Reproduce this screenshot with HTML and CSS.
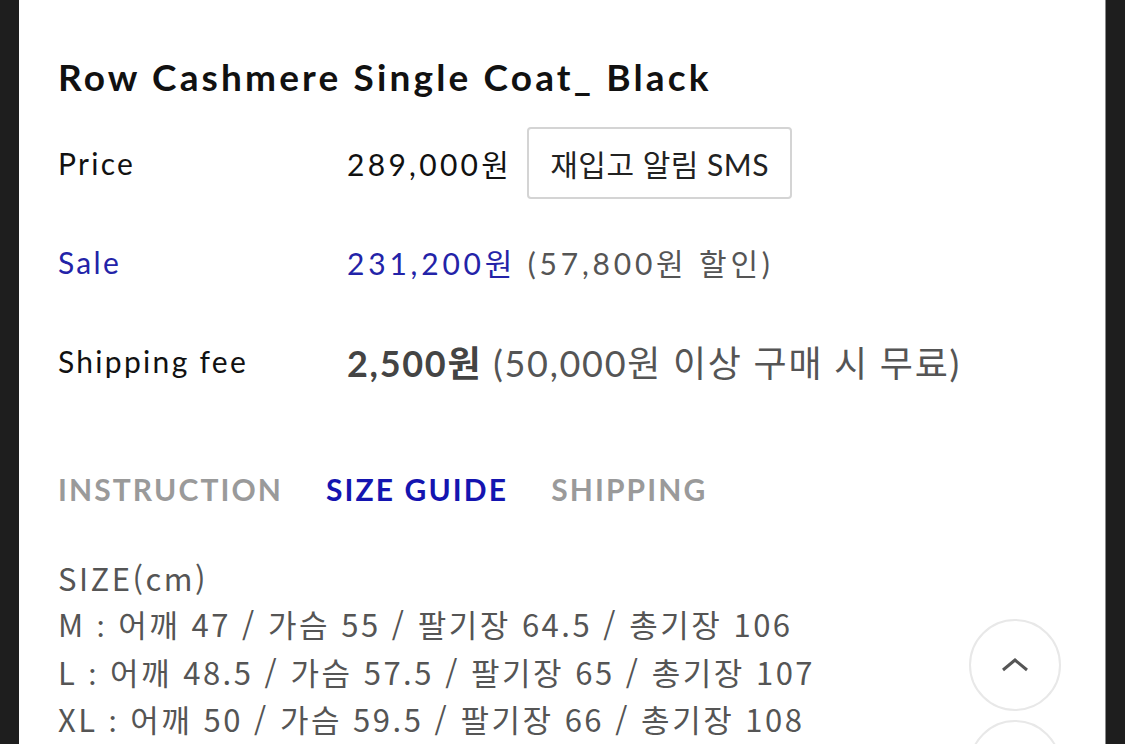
FILE: index.html
```html
<!DOCTYPE html>
<html lang="ko">
<head>
<meta charset="utf-8">
<link rel="stylesheet" href="styles.css">
</head>
<body>
<div class="frame">
  <main class="page">
    <h1 class="title">Row Cashmere Single Coat_ Black</h1>
    <div class="info">
      <div class="label">Price</div>
      <div class="value price"><span>289,000원</span><button class="restock">재입고 알림 SMS</button></div>
      <div class="label sale">Sale</div>
      <div class="value sale-value"><span class="sale">231,200원</span> <span class="muted">(57,800원 할인)</span></div>
      <div class="label">Shipping fee</div>
      <div class="value ship"><b>2,500원</b> <span>(50,000원 이상 구매 시 무료)</span></div>
    </div>
    <nav class="tabs">
      <span class="tab">INSTRUCTION</span>
      <span class="tab active">SIZE GUIDE</span>
      <span class="tab">SHIPPING</span>
    </nav>
    <div class="sizes">
      <p>SIZE(cm)</p>
      <p>M <span class="colon">:</span> 어깨 47 / 가슴 55 / 팔기장 64.5 / 총기장 106</p>
      <p>L <span class="colon">:</span> 어깨 48.5 / 가슴 57.5 / 팔기장 65 / 총기장 107</p>
      <p>XL <span class="colon">:</span> 어깨 50 / 가슴 59.5 / 팔기장 66 / 총기장 108</p>
    </div>
    <button class="float up" aria-label="top">
      <svg width="28" height="16" viewBox="0 0 28 16"><path d="M2 13 L14 3 L26 13" fill="none" stroke="#555" stroke-width="3"/></svg>
    </button>
    <button class="float down" aria-label="bottom"></button>
  </main>
</div>
</body>
</html>
```
FILE: styles.css
```css
html, body {
  margin: 0;
  padding: 0;
  background: #1e1e1e;
  height: 744px;
  overflow: hidden;
}
.frame {
  display: flex;
  height: 744px;
  padding: 0 19px 0 19px;
}
.page {
  position: relative;
  flex: 1;
  background: #fff;
  border-right: 1px solid #8a8a8a;
  padding: 0 0 0 39px;
  overflow: hidden;
  font-family: Lato, "Noto Sans CJK KR", sans-serif;
  color: #111;
}
.title {
  margin: 54px 0 0;
  font-size: 37px;
  font-weight: 700;
  letter-spacing: 3.15px;
  line-height: 46px;
}
.info {
  display: grid;
  grid-template-columns: 289px 1fr;
  grid-auto-rows: 99px;
  align-items: center;
  margin-top: 13px;
}
.label {
  font-size: 30px;
  letter-spacing: 2.3px;
}
.value {
  font-size: 30px;
  letter-spacing: 3.3px;
}
.price {
  display: flex;
  align-items: center;
  gap: 15px;
}
.restock {
  height: 72px;
  padding: 0 21px;
  border: 2px solid #d4d4d4;
  border-radius: 4px;
  background: #fff;
  font-family: Lato, "Noto Sans CJK KR", sans-serif;
  font-size: 30px;
  color: #222;
  letter-spacing: 0.5px;
}
.sale-value { letter-spacing: 3.8px; }
.sale { color: #2323a8; }
.muted { color: #555; }
.ship { color: #555; font-size: 36px; letter-spacing: 1.7px; }
.ship b { color: #444; font-weight: 700; }
.tabs {
  display: flex;
  gap: 43px;
  margin-top: 61px;
  font-size: 30px;
  font-weight: 700;
  letter-spacing: 2.1px;
  color: #9a9a9a;
}
.tab.active { color: #1414b0; }
.sizes {
  margin-top: 48px;
  color: #555;
  font-family: "Noto Sans CJK KR", sans-serif;
  font-size: 31px;
  letter-spacing: 2.5px;
  line-height: 46.3px;
}
.sizes p { margin: 0; }
.colon { font-family: Lato, sans-serif; }
.float {
  position: absolute;
  width: 92px;
  height: 92px;
  border-radius: 50%;
  border: 2px solid #e8e8e8;
  background: #fff;
  display: flex;
  align-items: center;
  justify-content: center;
  padding: 0;
}
.up { left: 950px; top: 619px; }
.down { left: 950px; top: 720px; }
```
